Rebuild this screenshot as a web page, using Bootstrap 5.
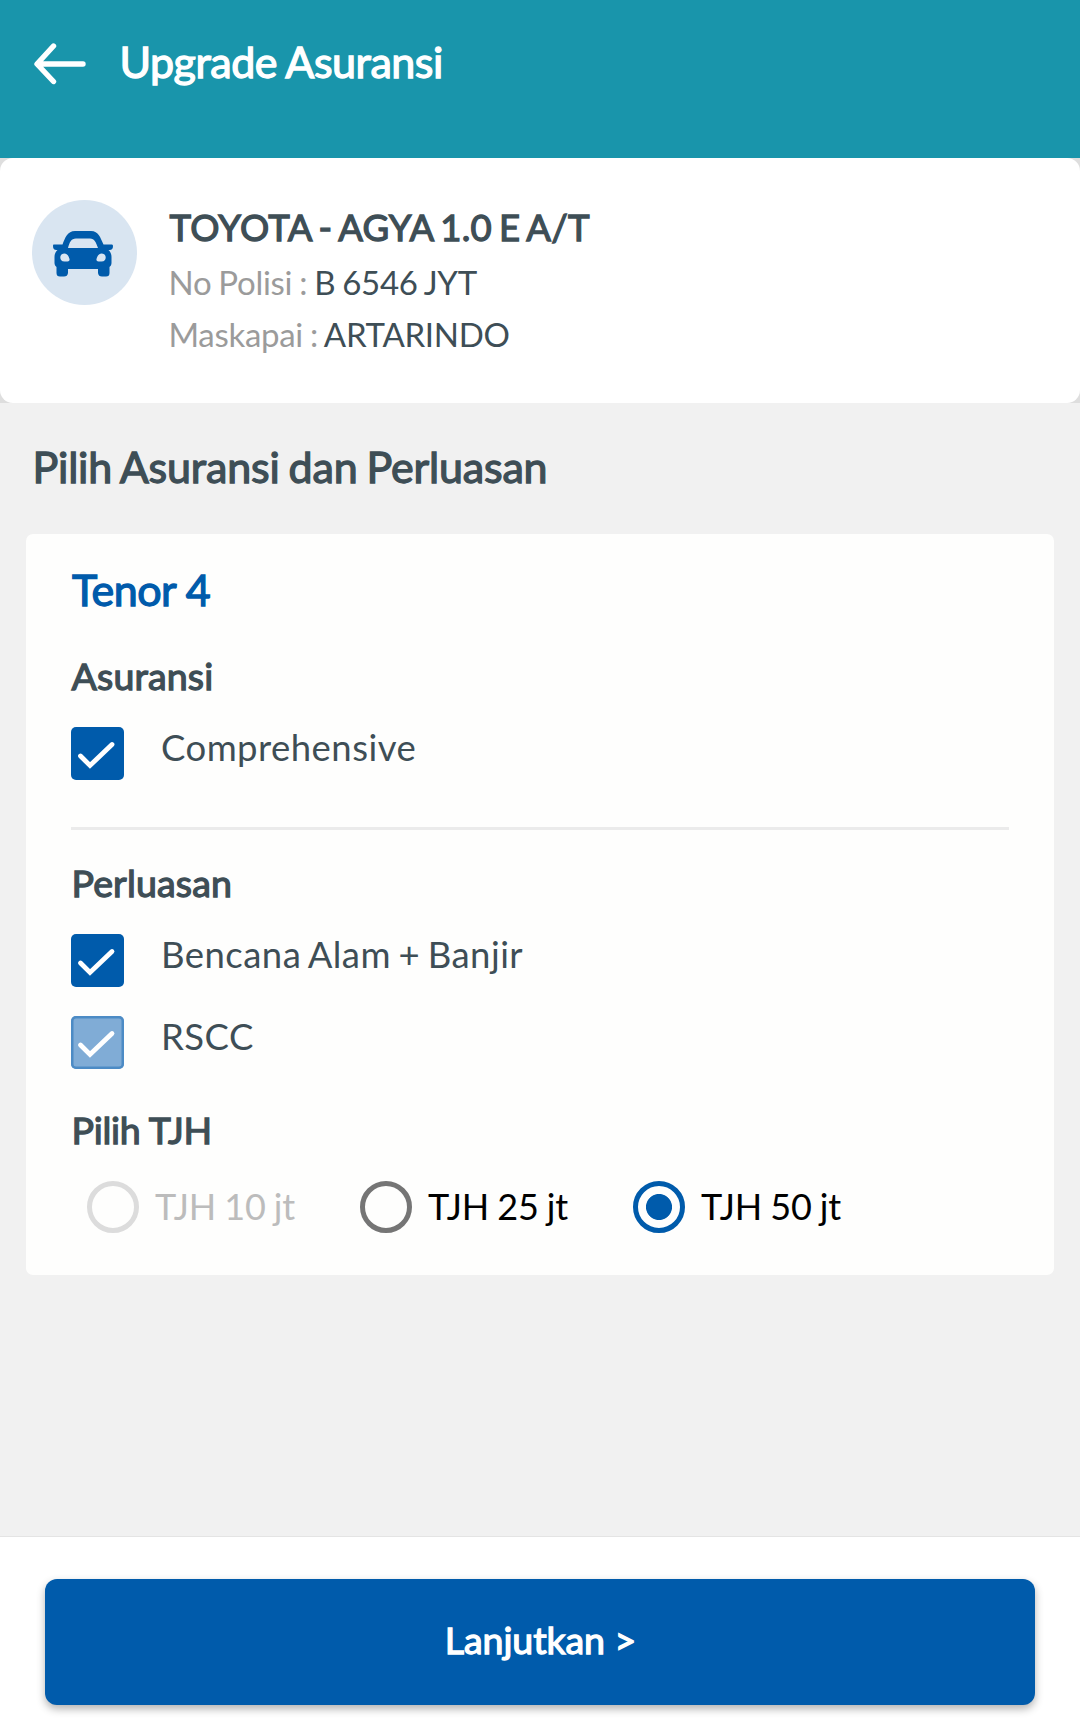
<!DOCTYPE html>
<html lang="id">
<head>
<meta charset="utf-8">
<meta name="viewport" content="width=device-width, initial-scale=1">
<title>Upgrade Asuransi</title>
<link href="https://cdn.jsdelivr.net/npm/bootstrap@5.3.0/dist/css/bootstrap.min.css" rel="stylesheet">
<style>
  :root { --brand: #005bab; --ink: #3e4e56; --teal: #1995ab; }
  body { font-family: Lato, "Open Sans", sans-serif; color: var(--ink); background: #f1f1f1; line-height: 1; }
  /* Medium weight: regular letterforms thickened slightly */
  .semi { font-weight: 400; -webkit-text-stroke: 1.3px currentColor; margin: 0; white-space: nowrap; }
  .app-bar { height: 158px; background: var(--teal); padding: 32px 34px 0; }
  .app-bar .semi { font-size: 43px; letter-spacing: -.48px; word-spacing: -.8px; line-height: 60px; margin-left: 33.5px; }
  .app-bar svg { margin-top: 10px; }
  .vehicle-wrap { background: #dedede; }
  .vehicle { height: 245px; border-radius: 13px; padding: 42px 32px 0; }
  .avatar { width: 105px; height: 105px; background: #d9e5f1; }
  .avatar svg { margin: 2px 3px 0 0; }
  .vehicle-info { margin-left: 31.5px; font-size: 33px; letter-spacing: -.3px; word-spacing: -1.1px; }
  .vehicle-info .semi { font-size: 36.5px; line-height: 55px; letter-spacing: .3px; word-spacing: -2.6px; margin: 0 0 1px 1px; }
  .vehicle-info p { line-height: 53px; margin: 0; }
  .vehicle-info p + p { line-height: 51px; }
  .muted-label { color: #9b9b9b; }
  .heading-xl { font-size: 43px; letter-spacing: -.18px; word-spacing: -1.8px; line-height: 60px; padding: 34px 0 37px 32.5px; }
  .tenor { height: 741px; margin: 0 26px; background: #fefefd; border-radius: 7px; padding: 0 45px; }
  .tenor-title { color: var(--brand); font-size: 43px; letter-spacing: -.55px; line-height: 60px; padding: 26px 0 0 1px; }
  .section-title { font-size: 37.5px; line-height: 50px; letter-spacing: .15px; margin: 28px 0 26px; padding-left: .5px; }
  .tenor-title + .section-title { margin-top: 31px; }
  .section-title.tjh { letter-spacing: -.25px; margin: 36px 0 0; }
  .option + .option { margin-top: 29px; }
  .check-box { width: 53px; height: 53px; background: var(--brand); border-radius: 5px; }
  .check-box.locked { background: #80acd6; box-shadow: inset 0 0 0 2.5px #4c8bc5; }
  .check-text { font-size: 36.5px; line-height: 40px; margin-left: 37px; letter-spacing: .46px; word-spacing: -2.2px; }
  .divider { height: 3px; background: #ebebeb; margin-top: 47px; }
  .radio-row { margin: 25px 0 0 16px; }
  .radio-item { width: 273px; font-size: 36px; letter-spacing: -.1px; word-spacing: -1.1px; line-height: 52px; color: #000; white-space: nowrap; }
  .radio-item.off { color: #bcbcbc; }
  .ring { width: 52px; height: 52px; border: 5px solid #757575; margin: 1px 16px 0 0; }
  .off .ring { border-color: #dcdcdc; }
  .on .ring { border-color: var(--brand); background: radial-gradient(circle, var(--brand) 12.6px, transparent 13.4px); }
  .action-bar { height: 195px; border-top: 1px solid #e4e4e4; padding: 42px 45px 0; }
  .btn-next { height: 126px; border: 0; border-radius: 12px; padding: 0 0 4px 1px; background: var(--brand); color: #fff; font-size: 37.5px; letter-spacing: -.08px; line-height: 40px; box-shadow: 0 4px 8px rgba(0,0,0,.3); }
</style>
</head>
<body>
<div class="d-flex flex-column vh-100">
  <header class="app-bar d-flex align-items-start text-white">
    <svg width="52" height="44" viewBox="0 0 52 44" fill="none" stroke="#fff" stroke-width="5.400" stroke-linecap="round" stroke-linejoin="round"><path d="M19.500 4 3 22l16.500 17.500M3.500 22H49"/></svg>
    <h1 class="semi">Upgrade Asuransi</h1>
  </header>

  <div class="vehicle-wrap">
    <section class="vehicle bg-white d-flex align-items-start">
      <div class="avatar rounded-circle d-flex align-items-center justify-content-center flex-shrink-0">
        <svg width="62" height="48" viewBox="0 0 62 48">
          <path fill="#005bab" fill-rule="evenodd" d="M1.500 14.500H10.500C13 8 15.500 1 23 1H39C46.500 1 48.500 8 51.500 14.500H60Q61 14.500 61 16C61 18.500 60 20 57.500 20H56.500C58.500 22 59.500 24 59.500 27V33C59.500 35 58.500 36 57.500 37V43Q57.500 46.500 54 46.500H50Q46.500 46.500 46 43V39H16V43Q15.500 46.500 12 46.500H8Q4.500 46.500 4.500 43V37C3.500 36 2.500 35 2.500 33V27C2.500 24 3.500 22 5.500 20H4.500C2 20 1 18.500 1 16Q1 14.500 1.500 14.500ZM16 18H46C44 12.500 42.500 8.500 38 8.500H24C19 8.500 17.500 12.500 16 18ZM12.500 23.500C9.500 23.500 8.300 25.500 8.300 27.500S9.500 31.500 12.500 31.500H15.500Q18 31.500 17.500 29C16.800 26 15 23.500 12.500 23.500ZM49.500 23.500C52.500 23.500 53.700 25.500 53.700 27.500S52.500 31.500 49.500 31.500H46.500Q44 31.500 44.500 29C45.200 26 47 23.500 49.500 23.500Z"/>
        </svg>
      </div>
      <div class="vehicle-info">
        <h2 class="semi">TOYOTA - AGYA 1.0 E A/T</h2>
        <p><span class="muted-label">No Polisi :</span> B 6546 JYT</p>
        <p><span class="muted-label">Maskapai :</span> ARTARINDO</p>
      </div>
    </section>
  </div>

  <main class="flex-grow-1">
    <h2 class="semi heading-xl">Pilih Asuransi dan Perluasan</h2>
    <section class="tenor">
      <h3 class="semi tenor-title">Tenor 4</h3>
      <h4 class="semi section-title">Asuransi</h4>
      <div class="option d-flex align-items-start">
        <span class="check-box d-flex"><svg width="53" height="53" fill="none" stroke="#fff" stroke-width="4.800" stroke-linecap="round"><path d="M9.500 29 19 38.500 41 17.500"/></svg></span>
        <span class="check-text">Comprehensive</span>
      </div>
      <div class="divider"></div>
      <h4 class="semi section-title">Perluasan</h4>
      <div class="option d-flex align-items-start">
        <span class="check-box d-flex"><svg width="53" height="53" fill="none" stroke="#fff" stroke-width="4.800" stroke-linecap="round"><path d="M9.500 29 19 38.500 41 17.500"/></svg></span>
        <span class="check-text">Bencana Alam + Banjir</span>
      </div>
      <div class="option d-flex align-items-start">
        <span class="check-box locked d-flex"><svg width="53" height="53" fill="none" stroke="#fff" stroke-width="4.800" stroke-linecap="round"><path d="M9.500 29 19 38.500 41 17.500"/></svg></span>
        <span class="check-text">RSCC</span>
      </div>
      <h4 class="semi section-title tjh">Pilih TJH</h4>
      <div class="radio-row d-flex">
        <div class="radio-item off d-flex"><span class="ring rounded-circle"></span>TJH 10 jt</div>
        <div class="radio-item d-flex"><span class="ring rounded-circle"></span>TJH 25 jt</div>
        <div class="radio-item on d-flex"><span class="ring rounded-circle"></span>TJH 50 jt</div>
      </div>
    </section>
  </main>

  <footer class="action-bar bg-white">
    <button type="button" class="btn btn-next semi w-100 d-block">Lanjutkan &gt;</button>
  </footer>
</div>
<script src="https://cdn.jsdelivr.net/npm/bootstrap@5.3.0/dist/js/bootstrap.bundle.min.js"></script>
</body>
</html>
